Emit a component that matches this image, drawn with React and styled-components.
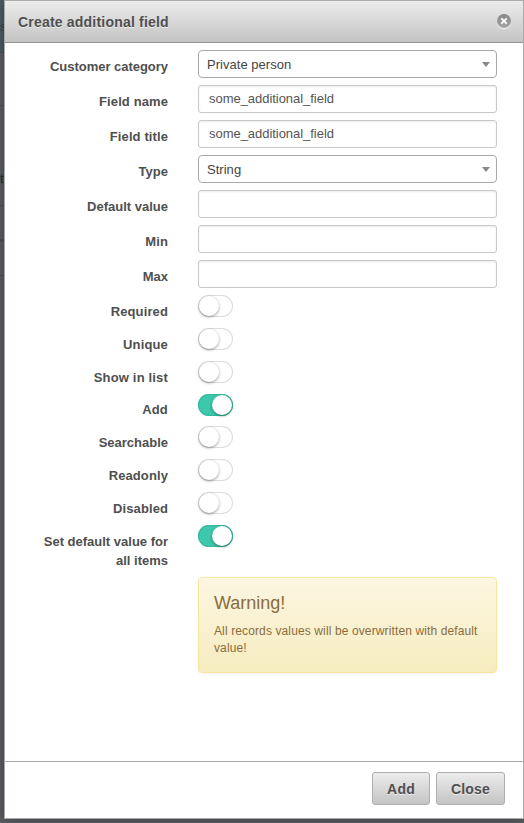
import React from 'react';
import styled, { createGlobalStyle, css } from 'styled-components';

const GlobalStyle = createGlobalStyle`
  *, *::before, *::after { box-sizing: border-box; }
  body {
    margin: 0;
    overflow: hidden;
    background: #4d5054;
    color: #4f4f4f;
    font: 13px/18.57px "Liberation Sans", Arial, sans-serif;
  }
`;

const Page = styled.div`
  position: relative;
  height: 823px;
  padding-left: 4px;
  overflow: hidden;
`;

const Backdrop = styled.div`
  position: absolute;
  inset: 0;
  background: #5a5d61;
`;

const BackdropBand = styled.div`
  height: 53px;
  padding-top: 18px;
  background: #4e5b62;
  border-bottom: 1px solid #4b4e51;
  color: #3b4248;
`;

const BackdropRow = styled.div`
  height: ${(p) => p.$height}px;
  padding-top: ${(p) => p.$pad || 0}px;
  border-bottom: ${(p) => p.$line || 1}px solid #4e5154;
  color: #26292c;
`;

const Dialog = styled.section`
  position: relative;
  display: flex;
  flex-direction: column;
  width: 520px;
  height: 819px;
  border: 1px solid #aaaaaa;
  background: #fff;
  box-shadow: 0 0 9px rgba(0, 0, 0, 0.35);
`;

const Header = styled.header`
  display: flex;
  align-items: center;
  justify-content: space-between;
  flex: none;
  height: 42px;
  padding: 0 12px 0 13px;
  border-bottom: 1px solid #949494;
  background: linear-gradient(#ececec, #c4c4c4);
`;

const Title = styled.h1`
  margin: 0;
  font-size: 14px;
  line-height: 20px;
  letter-spacing: 0.2px;
  color: #4f4f4f;
  text-shadow: 0 1px 0 rgba(255, 255, 255, 0.6);
`;

const CloseIcon = styled.button`
  display: block;
  width: 14px;
  height: 16px;
  padding: 0;
  border: 0;
  background: none;
  svg { display: block; overflow: visible; }
`;

const Form = styled.form`
  flex: 1;
  padding: 7px 26px 0 0;
`;

const Row = styled.div`
  display: grid;
  grid-template-columns: 163px 299px;
  column-gap: 30px;
  align-items: start;
  height: ${(p) => p.$height}px;
`;

const Label = styled.label`
  padding: 6.85px 0 0 30px;
  line-height: 19px;
  text-align: right;
  font-weight: bold;
  letter-spacing: ${(p) => p.$tracking || 0}px;
`;

const field = css`
  width: 299px;
  height: 28px;
  border-radius: 3px;
  background: #fff;
  font: 13px/18px "Liberation Sans", Arial, sans-serif;
`;

const TextInput = styled.input`
  ${field}
  display: block;
  margin: 0;
  padding: 3px 10px 4px;
  border: 1px solid #c8c8c8;
  color: #555;
  letter-spacing: -0.04px;
  box-shadow: inset 0 1px 2px rgba(0, 0, 0, 0.08);
`;

const SelectBox = styled.div`
  ${field}
  display: flex;
  align-items: center;
  justify-content: space-between;
  padding: 1px 6px 0 8px;
  border: 1px solid #aaa;
  border-radius: 4px;
  color: #444;
  letter-spacing: 0.03px;
  line-height: 19px;
`;

const Arrow = styled.span`
  border: 4px solid transparent;
  border-top: 5px solid #888;
  border-bottom: 0;
`;

const Track = styled.span`
  display: flex;
  justify-content: ${(p) => (p.$on ? 'flex-end' : 'flex-start')};
  width: 35px;
  height: 22px;
  padding: 1px;
  border-radius: 11px;
  background: ${(p) => (p.$on ? '#3dc8ac' : '#fff')};
  box-shadow: inset 0 0 0 1px ${(p) => (p.$on ? '#36b99e' : '#dcdcdc')};
`;

const Knob = styled.span`
  width: 20px;
  height: 20px;
  border-radius: 50%;
  background: #fff;
  box-shadow: 0 1px 3px rgba(0, 0, 0, 0.4);
`;

const Alert = styled.div`
  width: 299px;
  height: 96px;
  margin: 0 0 0 193px;
  padding: 15px;
  border: 1px solid #f5e79e;
  border-radius: 4px;
  background: linear-gradient(#fcf6e2, #f6ecbf);
  box-shadow: inset 0 1px 0 rgba(255, 255, 255, 0.25), 0 1px 2px rgba(0, 0, 0, 0.05);
  color: #8a6d3b;
`;

const AlertTitle = styled.h2`
  margin: 0 0 10px;
  font-size: 18px;
  font-weight: normal;
  line-height: 20px;
`;

const AlertText = styled.p`
  margin: 0 -4px 0 0;
  font-size: 12px;
  line-height: 17px;
  letter-spacing: 0.12px;
`;

const Footer = styled.footer`
  display: flex;
  justify-content: flex-end;
  gap: 6px;
  flex: none;
  height: 57px;
  padding: 10px 18px 0 0;
  border-top: 1px solid #aaa;
`;

const Button = styled.button`
  width: ${(p) => p.$width}px;
  height: 33px;
  padding: 0;
  border: 1px solid #aeaeae;
  border-radius: 3px;
  background: linear-gradient(#ececec, #c4c4c4);
  color: #4f4f4f;
  font: bold 14px/20px "Liberation Sans", Arial, sans-serif;
  letter-spacing: 0.2px;
  text-shadow: 0 1px 0 rgba(255, 255, 255, 0.6);
`;

const FIELDS = [
  { label: 'Customer category', value: 'Private person', select: true, tracking: -0.03 },
  { label: 'Field name', value: 'some_additional_field', tracking: 0.1 },
  { label: 'Field title', value: 'some_additional_field', tracking: 0.1 },
  { label: 'Type', value: 'String', select: true },
  { label: 'Default value', value: '' },
  { label: 'Min', value: '', tracking: 0.15 },
  { label: 'Max', value: '' },
];

const SWITCHES = [
  { label: 'Required', tracking: 0.12 },
  { label: 'Unique', tracking: 0.15 },
  { label: 'Show in list', tracking: 0.17 },
  { label: 'Add', on: true, tracking: 0.2 },
  { label: 'Searchable' },
  { label: 'Readonly', tracking: 0.1 },
  { label: 'Disabled', tracking: 0.1 },
  { label: 'Set default value for all items', on: true, height: 52 },
];

function Switch({ on }) {
  return (
    <Track $on={on} role="switch" aria-checked={!!on}>
      <Knob />
    </Track>
  );
}

export default function App() {
  return (
    <Page>
      <GlobalStyle />
      <Backdrop aria-hidden="true">
        <BackdropBand>s</BackdropBand>
        <BackdropRow $height={53} />
        <BackdropRow $height={100} $pad={64}>t</BackdropRow>
        <BackdropRow $height={36} $line={3} />
        <BackdropRow $height={34} />
      </Backdrop>
      <Dialog role="dialog" aria-label="Create additional field">
        <Header>
          <Title>Create additional field</Title>
          <CloseIcon type="button" aria-label="Dismiss">
            <svg width="14" height="15" viewBox="0 0 14 15">
              <defs>
                <linearGradient id="disc" x1="0" y1="0" x2="0" y2="1">
                  <stop offset="0" stopColor="#868686" />
                  <stop offset="1" stopColor="#a6a6a6" />
                </linearGradient>
              </defs>
              <circle cx="7" cy="8" r="7.2" fill="#f4f4f4" />
              <circle cx="7" cy="7" r="7" fill="url(#disc)" />
              <path d="M4.3 4.3l5.4 5.4M9.7 4.3l-5.4 5.4" stroke="#fff" strokeWidth="1.9" />
            </svg>
          </CloseIcon>
        </Header>
        <Form>
          {FIELDS.map((f) => (
            <Row key={f.label} $height={35}>
              <Label $tracking={f.tracking}>{f.label}</Label>
              {f.select ? (
                <SelectBox>
                  {f.value}
                  <Arrow />
                </SelectBox>
              ) : (
                <TextInput defaultValue={f.value} />
              )}
            </Row>
          ))}
          {SWITCHES.map((s) => (
            <Row key={s.label} $height={s.height || 32.86}>
              <Label $tracking={s.tracking}>{s.label}</Label>
              <Switch on={s.on} />
            </Row>
          ))}
          <Alert>
            <AlertTitle>Warning!</AlertTitle>
            <AlertText>All records values will be overwritten with default value!</AlertText>
          </Alert>
        </Form>
        <Footer>
          <Button type="button" $width={58}>Add</Button>
          <Button type="button" $width={69}>Close</Button>
        </Footer>
      </Dialog>
    </Page>
  );
}
